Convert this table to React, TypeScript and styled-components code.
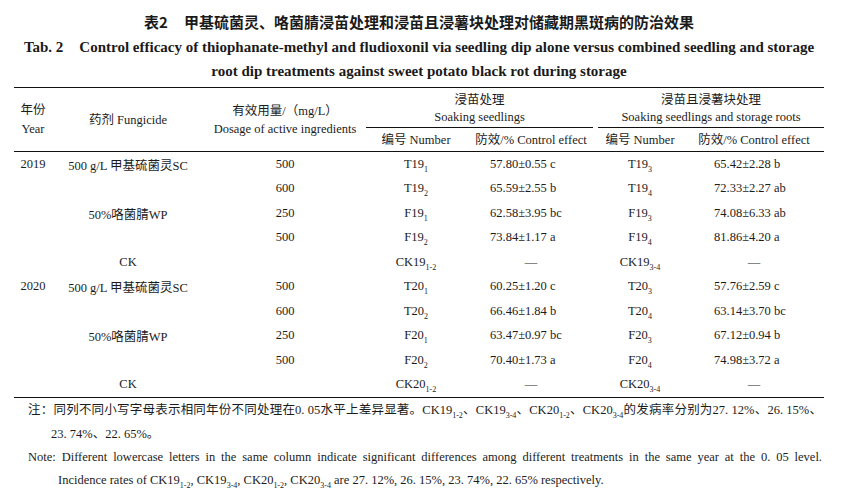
import React from "react";
import styled, { createGlobalStyle } from "styled-components";

const Global = createGlobalStyle`
  html, body { margin: 0; padding: 0; background: #fff; }
  body { font-family: "Liberation Serif", "Noto Sans CJK SC", serif; color: #1c1c1c; }
`;

const serif = `"Liberation Serif", "Noto Sans CJK SC", serif`;

const Page = styled.div`
  width: 810px;
  padding: 11px 0 0 14px;
  font-family: ${serif};
`;

const Caption = styled.div`
  text-align: center;
`;

const CnTitle = styled.div`
  font-family: "Noto Sans CJK SC", sans-serif;
  font-weight: 700;
  font-size: 15px;
  line-height: 22px;
  color: #1a1a1a;
`;

const EnTitle = styled.div`
  font-family: "Liberation Serif", serif;
  font-weight: 700;
  font-size: 15px;
  line-height: 24px;
  margin-top: 2px;
  color: #1a1a1a;
`;

const Label = styled.span<{ $gap: number }>`
  margin-right: ${(p) => p.$gap}px;
`;

const Table = styled.div`
  margin-top: 4px;
  border-top: 1.5px solid #111;
  border-bottom: 1.5px solid #111;
  font-size: 12.5px;
`;

const cols = "38px 152px 162px 100px 130px 88px 140px";

const Head = styled.div`
  display: grid;
  grid-template-columns: ${cols};
  grid-template-rows: 40px 23px;
  border-bottom: 1px solid #111;
`;

const HeadCell = styled.div<{ $col: string; $row: string; $lh?: number }>`
  grid-column: ${(p) => p.$col};
  grid-row: ${(p) => p.$row};
  display: flex;
  flex-direction: column;
  align-items: center;
  justify-content: center;
  text-align: center;
  line-height: ${(p) => p.$lh ?? 18}px;
  white-space: nowrap;
`;

const GroupCell = styled.div<{ $col: string; $ml: number; $mr: number }>`
  grid-column: ${(p) => p.$col};
  grid-row: 1;
  display: flex;
  flex-direction: column;
  align-items: center;
  justify-content: center;
  padding-top: 2px;
  line-height: 17px;
  border-bottom: 1px solid #111;
  margin: 0 ${(p) => p.$mr}px 0 ${(p) => p.$ml}px;
  white-space: nowrap;
`;

const Body = styled.div`
  display: grid;
  grid-template-columns: ${cols};
  grid-auto-rows: 24.5px;
`;

const Cell = styled.div<{ $pl?: number }>`
  display: flex;
  align-items: center;
  justify-content: ${(p) => (p.$pl !== undefined ? "flex-start" : "center")};
  padding-left: ${(p) => p.$pl ?? 0}px;
  white-space: nowrap;
`;

const Sub = styled.sub`
  font-size: 8px;
  line-height: 0;
  vertical-align: -4px;
`;

const Notes = styled.div`
  padding-left: 14px;
  width: 794px;
  font-size: 12.5px;
`;

const NoteCn = styled.div`
  line-height: 24px;
  font-size: 12.5px;
`;

const NoteEn = styled.div`
  line-height: 23px;
`;

const Justified = styled.div`
  text-align: justify;
  text-align-last: justify;
  white-space: nowrap;
`;

const Indented = styled.div<{ $indent: number }>`
  padding-left: ${(p) => p.$indent}px;
  white-space: nowrap;
`;

type Row = {
  year?: string;
  drug?: string;
  dose?: string;
  n1: [string, string];
  e1: string;
  n2: [string, string];
  e2: string;
};

const rows: Row[] = [
  { year: "2019", drug: "500 g/L 甲基硫菌灵SC", dose: "500", n1: ["T19", "1"], e1: "57.80±0.55 c", n2: ["T19", "3"], e2: "65.42±2.28 b" },
  { dose: "600", n1: ["T19", "2"], e1: "65.59±2.55 b", n2: ["T19", "4"], e2: "72.33±2.27 ab" },
  { drug: "50%咯菌腈WP", dose: "250", n1: ["F19", "1"], e1: "62.58±3.95 bc", n2: ["F19", "3"], e2: "74.08±6.33 ab" },
  { dose: "500", n1: ["F19", "2"], e1: "73.84±1.17 a", n2: ["F19", "4"], e2: "81.86±4.20 a" },
  { drug: "CK", n1: ["CK19", "1-2"], e1: "—", n2: ["CK19", "3-4"], e2: "—" },
  { year: "2020", drug: "500 g/L 甲基硫菌灵SC", dose: "500", n1: ["T20", "1"], e1: "60.25±1.20 c", n2: ["T20", "3"], e2: "57.76±2.59 c" },
  { dose: "600", n1: ["T20", "2"], e1: "66.46±1.84 b", n2: ["T20", "4"], e2: "63.14±3.70 bc" },
  { drug: "50%咯菌腈WP", dose: "250", n1: ["F20", "1"], e1: "63.47±0.97 bc", n2: ["F20", "3"], e2: "67.12±0.94 b" },
  { dose: "500", n1: ["F20", "2"], e1: "70.40±1.73 a", n2: ["F20", "4"], e2: "74.98±3.72 a" },
  { drug: "CK", n1: ["CK20", "1-2"], e1: "—", n2: ["CK20", "3-4"], e2: "—" },
];

const Code = ({ v }: { v: [string, string] }) => (
  <span>
    {v[0]}
    <Sub>{v[1]}</Sub>
  </span>
);

const Effect = ({ v, pl }: { v: string; pl: number }) =>
  v === "—" ? <Cell>—</Cell> : <Cell $pl={pl}>{v}</Cell>;

export default function App() {
  return (
    <Page>
      <Global />
      <Caption>
        <CnTitle>
          <Label $gap={16}>表2</Label>甲基硫菌灵、咯菌腈浸苗处理和浸苗且浸薯块处理对储藏期黑斑病的防治效果
        </CnTitle>
        <EnTitle>
          <Label $gap={16}>Tab. 2</Label>Control efficacy of thiophanate-methyl and fludioxonil via seedling dip alone versus combined seedling and storage
          <br />
          root dip treatments against sweet potato black rot during storage
        </EnTitle>
      </Caption>
      <Table>
        <Head>
          <HeadCell $col="1" $row="1 / 3" $lh={19}>
            <span>年份</span>
            <span>Year</span>
          </HeadCell>
          <HeadCell $col="2" $row="1 / 3">
            <span>药剂 Fungicide</span>
          </HeadCell>
          <HeadCell $col="3" $row="1 / 3">
            <span>有效用量/（mg/L）</span>
            <span>Dosage of active ingredients</span>
          </HeadCell>
          <GroupCell $col="4 / 6" $ml={0} $mr={3}>
            <span>浸苗处理</span>
            <span>Soaking seedlings</span>
          </GroupCell>
          <GroupCell $col="6 / 8" $ml={2} $mr={0}>
            <span>浸苗且浸薯块处理</span>
            <span>Soaking seedlings and storage roots</span>
          </GroupCell>
          <HeadCell $col="4" $row="2">编号 Number</HeadCell>
          <HeadCell $col="5" $row="2">防效/% Control effect</HeadCell>
          <HeadCell $col="6" $row="2">编号 Number</HeadCell>
          <HeadCell $col="7" $row="2">防效/% Control effect</HeadCell>
        </Head>
        <Body>
          {rows.map((r, i) => (
            <React.Fragment key={i}>
              <Cell>{r.year ?? ""}</Cell>
              <Cell>{r.drug ?? ""}</Cell>
              <Cell>{r.dose ?? ""}</Cell>
              <Cell>
                <Code v={r.n1} />
              </Cell>
              <Effect v={r.e1} pl={24} />
              <Cell>
                <Code v={r.n2} />
              </Cell>
              <Effect v={r.e2} pl={30} />
            </React.Fragment>
          ))}
        </Body>
      </Table>
      <Notes>
        <NoteCn>
          <Justified lang="zh">
            注：同列不同小写字母表示相同年份不同处理在0. 05水平上差异显著。CK19<Sub>1-2</Sub>、CK19<Sub>3-4</Sub>、CK20<Sub>1-2</Sub>、CK20<Sub>3-4</Sub>的发病率分别为27. 12%、26. 15%、
          </Justified>
          <Indented $indent={23}>23. 74%、22. 65%。</Indented>
        </NoteCn>
        <NoteEn>
          <Justified lang="en">
            Note: Different lowercase letters in the same column indicate significant differences among different treatments in the same year at the 0. 05 level.
          </Justified>
          <Indented $indent={30}>
            Incidence rates of CK19<Sub>1-2</Sub>, CK19<Sub>3-4</Sub>, CK20<Sub>1-2</Sub>, CK20<Sub>3-4</Sub> are 27. 12%, 26. 15%, 23. 74%, 22. 65% respectively.
          </Indented>
        </NoteEn>
      </Notes>
    </Page>
  );
}
